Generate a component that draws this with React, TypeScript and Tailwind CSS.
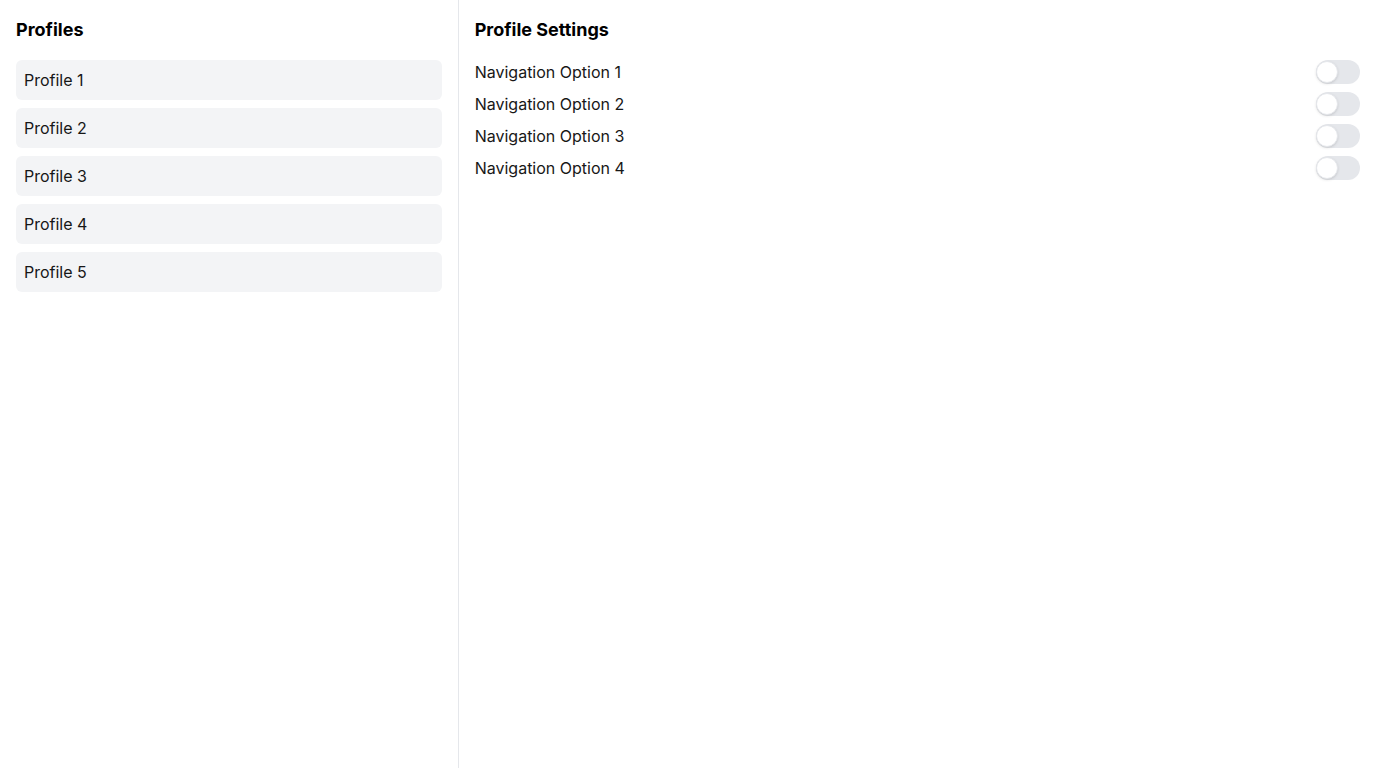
const PROFILES = ['Profile 1', 'Profile 2', 'Profile 3', 'Profile 4', 'Profile 5'];

const OPTIONS = ['Navigation Option 1', 'Navigation Option 2', 'Navigation Option 3', 'Navigation Option 4'];

export default function App() {
  return (
    <div className="flex h-[768px] w-full bg-white text-[#171717] font-['Inter',sans-serif]">
      {/* Profiles list */}
      <div className="w-1/3 border-r border-gray-200 p-4">
        <h2 className="text-lg font-bold mb-4 text-black">Profiles</h2>
        <div className="space-y-2">
          {PROFILES.map((p) => (
            <div key={p} className="h-10 flex items-center px-2 bg-gray-100 rounded-md">
              {p}
            </div>
          ))}
        </div>
      </div>

      {/* Settings */}
      <div className="flex-1 p-4">
        <h2 className="text-lg font-bold mb-4 text-black">Profile Settings</h2>
        <div className="space-y-2">
          {OPTIONS.map((o) => (
            <div key={o} className="flex items-center justify-between h-6">
              <span>{o}</span>
              <Toggle />
            </div>
          ))}
        </div>
      </div>
    </div>
  );
}

function Toggle() {
  return (
    <div className="relative w-11 h-6 rounded-full bg-gray-200">
      <span className="absolute left-0 top-px h-[22px] w-[22px] rounded-full bg-white border border-gray-200 shadow" />
    </div>
  );
}
